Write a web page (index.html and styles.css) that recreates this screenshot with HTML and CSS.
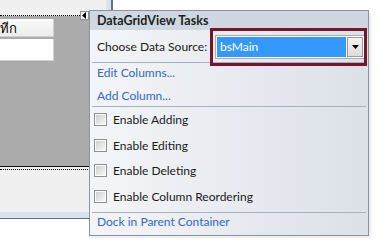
FILE: index.html
```html
<!DOCTYPE html>
<html lang="en">
<head>
    <meta charset="UTF-8">
    <title>DataGridView Tasks</title>
    <link rel="stylesheet" href="styles.css">
</head>
<body>
    <div class="canvas">
        <div class="form">
            <div class="form-body">
                <div class="grid">
                    <span class="tag-btn"><svg width="5" height="7" viewBox="0 0 5 7"><path d="M4 0 L4 7 L0 3.5 Z" fill="#000"/></svg></span>
                    <div class="grid-area">
                        <div class="col-header">ทีก</div>
                        <div class="cell"></div>
                    </div>
                </div>
            </div>
        </div>

        <div class="tasks">
            <div class="tasks-title">DataGridView Tasks</div>
            <div class="source-row">
                <span>Choose Data Source:</span>
                <div class="combo">
                    <span class="combo-value">bsMain</span>
                    <span class="combo-btn"><svg width="7" height="4" viewBox="0 0 7 4"><path d="M0 0 L7 0 L3.5 4 Z" fill="#000"/></svg></span>
                </div>
                <div class="highlight"></div>
            </div>
            <div class="sep"></div>
            <div class="links">
                <a href="#" class="link">Edit Columns...</a>
                <a href="#" class="link">Add Column...</a>
            </div>
            <div class="sep"></div>
            <div class="checks">
                <label class="check"><span class="box"></span>Enable Adding</label>
                <label class="check"><span class="box"></span>Enable Editing</label>
                <label class="check"><span class="box"></span>Enable Deleting</label>
                <label class="check"><span class="box"></span>Enable Column Reordering</label>
            </div>
            <div class="sep"></div>
            <div class="links last">
                <a href="#" class="link">Dock in Parent Container</a>
            </div>
        </div>
    </div>
</body>
</html>
```

FILE: styles.css
```css
body {
    margin: 0;
    background-color: #ffffff;
    font-family: Lato, "Noto Sans", sans-serif;
    font-size: 12px;
    color: #1a1a1a;
    overflow: hidden;
}

.canvas {
    position: relative;
    width: 386px;
    height: 247px;
}

/* designer form behind the smart tag */
.form {
    width: 111px;
    height: 218px;
    border-right: 2px solid #66707a;
    border-bottom: 1px solid #66707a;
}

.form-body {
    height: 212px;
    background-color: #f0f0f0;
    border-right: 5px solid #d8e3f0;
    border-bottom: 6px solid #d8e3f0;
}

.grid {
    position: relative;
    top: 15px;
    width: 96px;
    border-top: 1px dotted #000000;
    border-bottom: 1px dotted #000000;
    padding-bottom: 2px;
}

.tag-btn {
    position: absolute;
    left: 80px;
    top: -5px;
    width: 9px;
    height: 9px;
    box-sizing: border-box;
    background-color: #f4f4f4;
    border: 1px solid #8c8c8c;
    display: flex;
    align-items: center;
    justify-content: center;
}

.grid-area {
    height: 151px;
    background-color: #ababab;
    border-bottom: 1px solid #101010;
    padding-top: 3px;
    box-sizing: border-box;
}

.col-header {
    width: 54px;
    height: 18px;
    box-sizing: border-box;
    background: linear-gradient(#fafafa, #ececec);
    border-bottom: 1px solid #d0d0d0;
    border-right: 1px solid #d0d0d0;
    line-height: 18px;
    font-family: "Noto Sans", sans-serif;
    font-size: 13px;
    color: #000000;
    overflow: hidden;
}

.cell {
    width: 54px;
    height: 22px;
    margin-top: 2px;
    box-sizing: border-box;
    background-color: #ffffff;
    border-right: 1px solid #d0d0d0;
    border-bottom: 1px solid #d0d0d0;
}

/* smart tag panel */
.tasks {
    position: absolute;
    left: 89px;
    top: 10px;
    width: 280px;
    height: 226px;
    box-sizing: border-box;
    border: 1px solid #8a939e;
    background: linear-gradient(to right, #f4f5f8, #dce1e8);
    box-shadow: 2px 2px 2px rgba(0, 0, 0, 0.08);
}

.tasks-title {
    height: 19px;
    line-height: 19px;
    padding-left: 7px;
    background-color: #cfd7e1;
    font-size: 12.5px;
    font-weight: bold;
    color: #1e1e1e;
}

.source-row {
    position: relative;
    height: 32px;
    display: flex;
    align-items: center;
    padding-left: 7px;
}

.combo {
    margin-left: auto;
    margin-right: 3px;
    margin-top: 2px;
    width: 150px;
    height: 24px;
    box-sizing: border-box;
    border: 1px solid #abadb3;
    padding: 1px;
    background-color: #ffffff;
    display: flex;
    gap: 1px;
}

.combo-value {
    flex: 1;
    background-color: #3399ff;
    color: #ffffff;
    padding-left: 3px;
    line-height: 20px;
}

.combo-btn {
    width: 16px;
    box-sizing: border-box;
    border: 1px solid #9a9a9a;
    background: linear-gradient(#f3f3f3, #dcdcdc);
    display: flex;
    align-items: center;
    justify-content: center;
}

.highlight {
    position: absolute;
    left: 120px;
    top: -2px;
    width: 157px;
    height: 38px;
    box-sizing: border-box;
    border: 3px solid #76152b;
}

.sep {
    height: 1px;
    margin: 0 2px;
    background-color: #a7b0bc;
}

.links {
    display: flex;
    flex-direction: column;
    align-items: flex-start;
    padding-bottom: 1px;
}

.links.last {
    padding-bottom: 4px;
}

.link {
    height: 19px;
    line-height: 19px;
    padding-left: 7px;
    color: #3169c6;
    text-decoration: none;
}

.link + .link {
    margin-top: 4px;
}

.links.last .link {
    height: 18px;
    line-height: 18px;
}

.checks {
    padding-bottom: 3px;
}

.check {
    height: 25.5px;
    display: flex;
    align-items: center;
    padding-left: 4px;
    gap: 6px;
}

.box {
    width: 13px;
    height: 13px;
    box-sizing: border-box;
    border: 1px solid #8e8f8f;
    padding: 1px;
    background: linear-gradient(135deg, #cfcfcf, #f7f7f7) content-box, #fcfcfc;
}
```
